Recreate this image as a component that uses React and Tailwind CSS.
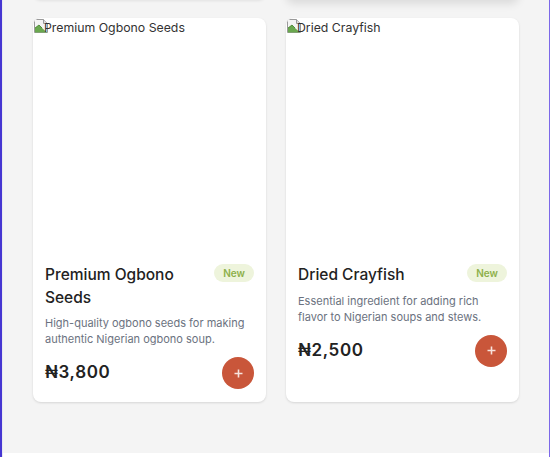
import React from "react";

function BrokenImg() {
  return (
    <svg width="16" height="16" viewBox="0 0 16 16" className="shrink-0">
      <path d="M1.5 1.5h9l4 4v9h-13z" fill="#f4f4f4" stroke="#9a9a9a" strokeWidth="1" />
      <path d="M2 14.5 L2 10 L6 7 L9 10 L14 14.5 Z" fill="#6aa84f" />
      <path d="M2 10 L6 7 L9 10" fill="none" stroke="#3b7d23" strokeWidth="0.8" />
      <path d="M10.5 1.5v4h4" fill="#dcdcdc" stroke="#9a9a9a" strokeWidth="1" />
    </svg>
  );
}

function Card({ name, title, desc, price }) {
  return (
    <div className="flex flex-col overflow-hidden rounded-lg bg-white shadow-[0_1px_3px_rgba(0,0,0,0.08),0_1px_2px_rgba(0,0,0,0.05)]">
      <div className="h-[234px] w-full">
        <div className="flex items-start font-['Inter',sans-serif] text-[12.3px] leading-[18px] text-[#333]">
          <BrokenImg />
          <span className="-ml-[5px] pt-[1px]">{name}</span>
        </div>
      </div>
      <div className="flex flex-1 flex-col px-3 pt-3 pb-[13px]">
        <div className="flex items-start justify-between gap-3">
          <h3 className="font-['Inter',sans-serif] text-[15.5px] font-medium leading-[22.5px] text-[#222]">
            {title}
          </h3>
          <span className="mt-0 shrink-0 rounded-full bg-[#eef4dc] px-[9px] py-[3px] font-['Inter',sans-serif] text-[10px] font-semibold leading-[12px] text-[#8db04a]">
            New
          </span>
        </div>
        <p className="mt-1.5 font-['Inter',sans-serif] text-[11px] leading-4 text-[#6b7280]">
          {desc}
        </p>
        <div className="mt-2.5 flex items-center justify-between">
          <span className="font-['Inter','DejaVu_Sans',sans-serif] text-[17px] font-semibold tracking-[0.6px] text-[#222]">
            {price}
          </span>
          <button className="flex h-8 w-8 items-center justify-center rounded-full bg-[#c9563a]">
            <svg width="9" height="9" viewBox="0 0 9 9">
              <path d="M4.5 0.5v8M0.5 4.5h8" stroke="#f7e3dd" strokeWidth="1.6" />
            </svg>
          </button>
        </div>
      </div>
    </div>
  );
}

export default function App() {
  return (
    <div className="flex h-[457px] w-[550px] overflow-hidden bg-white">
      <div className="w-[2px] shrink-0 bg-[#4636d2]" />
      <div className="w-[1px] shrink-0 bg-[#e9e9f0]" />
      <div className="flex flex-1 flex-col">
        <div className="h-[453px] overflow-hidden bg-[#f4f4f4] pl-[30px] pr-[30px]">
          <div className="-mt-[20px] grid grid-cols-2 gap-5">
            <div className="h-[20px] rounded-lg bg-white shadow-[0_1px_3px_rgba(0,0,0,0.08)]" />
            <div className="h-[20px] rounded-lg bg-white shadow-[0_4px_8px_rgba(0,0,0,0.1)]" />
          </div>
          <div className="mt-[18px] grid grid-cols-2 gap-5">
            <Card
              name="Premium Ogbono Seeds"
              title="Premium Ogbono Seeds"
              desc="High-quality ogbono seeds for making authentic Nigerian ogbono soup."
              price="₦3,800"
            />
            <Card
              name="Dried Crayfish"
              title="Dried Crayfish"
              desc="Essential ingredient for adding rich flavor to Nigerian soups and stews."
              price="₦2,500"
            />
          </div>
        </div>
        <div className="flex-1 bg-white" />
      </div>
      <div className="w-[1px] shrink-0 bg-[#7c68e8]" />
    </div>
  );
}
